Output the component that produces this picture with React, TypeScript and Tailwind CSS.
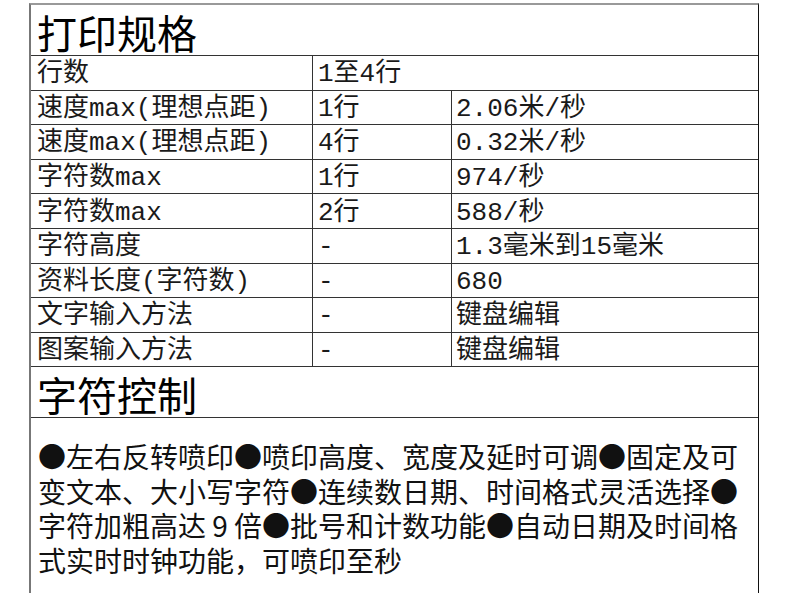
const rows: [string, string, string | null][] = [
  ['行数', '1至4行', null],
  ['速度max(理想点距)', '1行', '2.06米/秒'],
  ['速度max(理想点距)', '4行', '0.32米/秒'],
  ['字符数max', '1行', '974/秒'],
  ['字符数max', '2行', '588/秒'],
  ['字符高度', '-', '1.3毫米到15毫米'],
  ['资料长度(字符数)', '-', '680'],
  ['文字输入方法', '-', '键盘编辑'],
  ['图案输入方法', '-', '键盘编辑'],
];

const App = () => {
  return (
    <div className="w-[790px] h-[593px] overflow-hidden bg-white">
      <div
        className="ml-[29px] mt-[3px] w-[730px] h-[620px] border-l-2 border-l-[#777] border-r border-r-[#111] border-t-2 border-t-[#999] text-[#1a1a1a]"
        style={{ fontFamily: '"Liberation Mono", "Noto Sans CJK SC", monospace' }}
      >
        <div
          className="h-[51px] flex items-center pl-[6px] pt-[3px] border-b border-[#333] text-[40px] text-black"
          style={{ fontFamily: '"Noto Sans CJK SC", sans-serif' }}
        >
          打印规格
        </div>

        {rows.map(([a, b, c], i) => (
          <div
            key={i}
            className="grid grid-cols-[282px_139px_1fr] h-[34.6px] border-b border-[#333] text-[26px] leading-none"
          >
            <div className="flex items-center pl-[6px] pt-[3px] border-r border-[#333] whitespace-nowrap">{a}</div>
            {c === null ? (
              <div className="col-span-2 flex items-center pl-[5px] pt-[3px] whitespace-nowrap">{b}</div>
            ) : (
              <>
                <div className="flex items-center pl-[5px] pt-[3px] border-r border-[#333] whitespace-nowrap">{b}</div>
                <div className="flex items-center pl-[4px] pt-[3px] whitespace-nowrap">{c}</div>
              </>
            )}
          </div>
        ))}

        <div
          className="h-[51px] flex items-center pl-[6px] pt-[3px] border-b border-[#333] text-[40px] text-black"
          style={{ fontFamily: '"Noto Sans CJK SC", sans-serif' }}
        >
          字符控制
        </div>

        <p
          className="pl-[7px] pt-[21px] text-[28px] leading-[34.5px] text-[#111] whitespace-nowrap"
          style={{ fontFamily: '"Noto Sans CJK SC", sans-serif' }}
        >
          ●左右反转喷印●喷印高度、宽度及延时可调●固定及可<br />
          变文本、大小写字符●连续数日期、时间格式灵活选择●<br />
          字符加粗高达&nbsp;9&nbsp;倍●批号和计数功能●自动日期及时间格<br />
          式实时时钟功能，可喷印至秒
        </p>
      </div>
    </div>
  );
};

export default App;
